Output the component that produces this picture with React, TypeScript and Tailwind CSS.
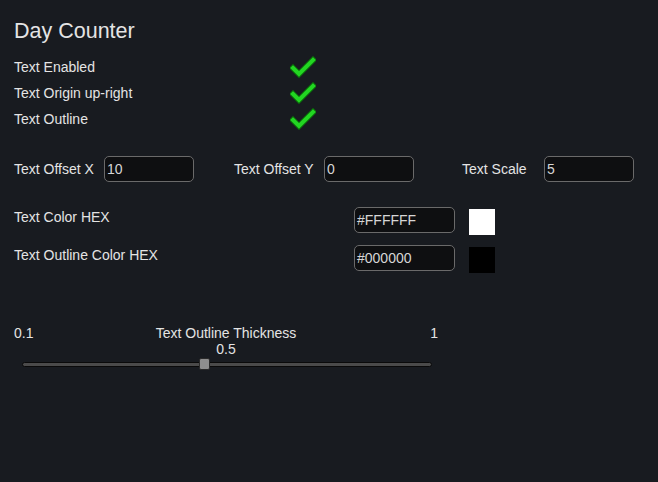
const Check = () => (
  <svg width="26" height="22" viewBox="0 0 26 22">
    <path d="M3 12 L9 18 L23 4" fill="none" stroke="#0a6a0a" strokeWidth="6" strokeLinecap="square" />
    <path d="M3 12 L9 18 L23 4" fill="none" stroke="#22d622" strokeWidth="4" strokeLinecap="square" />
  </svg>
);

const Field = ({ value, w }: { value: string; w: string }) => (
  <div
    className={`${w} h-[26px] rounded-[5px] border border-[#6a6a6a] bg-[#0e0f11] pl-[2px] flex items-center text-[14px] text-[#d6d6d6]`}
  >
    {value}
  </div>
);

export default function App() {
  const toggles = ["Text Enabled", "Text Origin up-right", "Text Outline"];

  return (
    <div
      className="w-[658px] h-[482px] bg-[#181b20] text-[#e4e4e4] pl-[14px] pt-[18px]"
      style={{ fontFamily: '"Liberation Sans", Arial, sans-serif' }}
    >
      <h1 className="text-[21.5px] leading-[26px]">Day Counter</h1>

      <div className="mt-[10px] flex flex-col">
        {toggles.map((t) => (
          <div key={t} className="flex items-center h-[26px]">
            <span className="w-[276px] text-[14px]">{t}</span>
            <Check />
          </div>
        ))}
      </div>

      <div className="mt-[24px] flex items-center text-[14px]">
        <div className="w-[220px] flex items-center">
          <span className="w-[90px]">Text Offset X</span>
          <Field value="10" w="w-[90px]" />
        </div>
        <div className="w-[228px] flex items-center">
          <span className="w-[90px]">Text Offset Y</span>
          <Field value="0" w="w-[90px]" />
        </div>
        <div className="flex items-center">
          <span className="w-[82px]">Text Scale</span>
          <Field value="5" w="w-[90px]" />
        </div>
      </div>

      <div className="mt-[25px] flex flex-col gap-[10px] text-[14px]">
        <div className="flex items-start">
          <span className="w-[340px] leading-[20px]">Text Color HEX</span>
          <Field value="#FFFFFF" w="w-[101px]" />
          <div className="ml-[14px] mt-[2px] w-[26px] h-[26px] bg-white" />
        </div>
        <div className="flex items-start">
          <span className="w-[340px] leading-[20px]">Text Outline Color HEX</span>
          <Field value="#000000" w="w-[101px]" />
          <div className="ml-[14px] mt-[2px] w-[26px] h-[26px] bg-black" />
        </div>
      </div>

      <div className="mt-[52px] w-[424px] text-[14px]">
        <div className="flex leading-[16px]">
          <span className="flex-1">0.1</span>
          <span>Text Outline Thickness</span>
          <span className="flex-1 text-right">1</span>
        </div>
        <div className="text-center leading-[16px]">0.5</div>
        <div className="relative mt-[5px] ml-[8px] w-[410px] h-[5px] rounded-full bg-[#4a4a4a] border border-[#0a0a0a]">
          <div className="absolute left-[176px] top-[-5px] w-[11px] h-[12px] rounded-[2px] bg-[#8e8e8e] border border-[#2a2a2a]" />
        </div>
      </div>
    </div>
  );
}
